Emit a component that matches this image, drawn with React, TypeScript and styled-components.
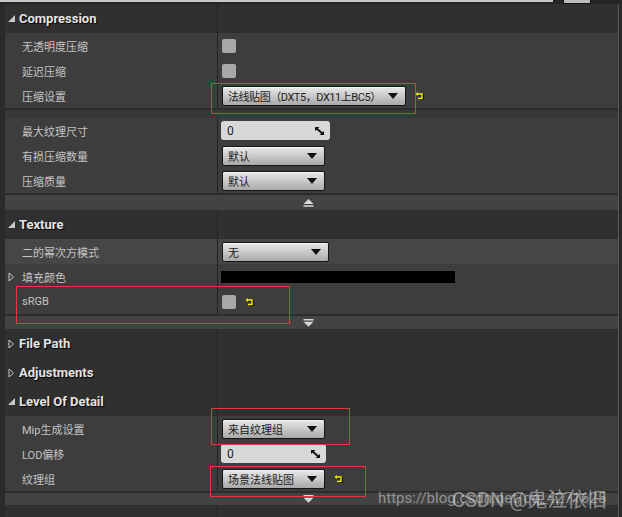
import React from 'react';
import styled, { createGlobalStyle } from 'styled-components';

const GlobalStyle = createGlobalStyle`
  html, body {
    margin: 0;
    padding: 0;
    background: #2a2a2a;
  }
  body {
    font-family: Roboto, "Noto Sans CJK SC", sans-serif;
  }
`;

const Page = styled.div`
  position: relative;
  width: 622px;
  height: 517px;
  overflow: hidden;
  background: #2a2a2a;
  display: flex;
  flex-direction: column;
`;

const TopBar = styled.div`
  height: 4px;
  flex-shrink: 0;
  display: flex;
  align-items: flex-start;
  gap: 10px;
  background: #262626;
`;

const SearchStub = styled.div`
  width: 553px;
  height: 2px;
  background: #c8c8c8;
`;

const ButtonStub = styled.div`
  width: 26px;
  height: 3px;
  background: #bcbcbc;
  border: 1px solid #111;
  border-top: none;
`;

const Panel = styled.div`
  margin-left: 5px;
  width: 613px;
  flex: 1;
  display: flex;
  flex-direction: column;
  background: #303030;
  border-right: 1px solid #565656;
`;

const HeaderWrap = styled.div`
  display: grid;
  grid-template-columns: 213px 1fr;
  height: 29px;
  flex-shrink: 0;
  background: #303030;
`;

const HeaderName = styled.div`
  display: flex;
  align-items: center;
  gap: 4px;
  padding-left: 3px;
  border-right: 1px solid #222;
  font-size: 13px;
  font-weight: 700;
  color: #e4e4e4;
  text-shadow: 1px 1px 1px #000;
`;

const RowWrap = styled.div<{ $hover?: boolean }>`
  display: grid;
  grid-template-columns: 213px 1fr;
  height: 25px;
  flex-shrink: 0;
  background: ${p => (p.$hover ? '#464646' : '#3d3d3d')};
`;

const NameCell = styled.div<{ $expander?: boolean }>`
  display: flex;
  align-items: center;
  padding-left: ${p => (p.$expander ? 3 : 17)}px;
  border-right: 1px solid #222;
  color: #c4c4c4;
  font-size: 11px;
  white-space: nowrap;
`;

const ValueCell = styled.div`
  display: flex;
  align-items: center;
  gap: 9px;
  padding-left: 4px;
`;

const Separator = styled.div`
  height: 10px;
  flex-shrink: 0;
  box-sizing: border-box;
  background: #383838;
  border-top: 2px solid #2c2c2c;
`;

const AdvancedStrip = styled.div<{ $h: number }>`
  height: ${p => p.$h}px;
  flex-shrink: 0;
  box-sizing: border-box;
  display: flex;
  align-items: center;
  justify-content: center;
  padding-right: 7px;
  background: #434343;
  border-top: 2px solid #2c2c2c;
`;

const Filler = styled.div`
  flex: 1;
  display: grid;
  grid-template-columns: 213px 1fr;
`;

const FillerName = styled.div`
  border-right: 1px solid #222;
`;

const Checkbox = styled.div`
  width: 14px;
  height: 14px;
  border-radius: 2px;
  background: #a8a8a8;
`;

const Combo = styled.div<{ $w?: number }>`
  display: flex;
  align-items: center;
  justify-content: space-between;
  gap: 4px;
  box-sizing: border-box;
  width: ${p => (p.$w ? `${p.$w}px` : 'auto')};
  height: 20px;
  padding: 0 7px 0 5px;
  border: 1px solid #161616;
  border-radius: 2px;
  background: linear-gradient(#e9e9e9, #a9a9a9);
  box-shadow: inset 0 1px 0 #f6f6f6;
  color: #1c1c1c;
  font-size: 11px;
  white-space: nowrap;

  svg {
    flex-shrink: 0;
  }
`;

const ComboText = styled.span<{ $tight?: boolean }>`
  letter-spacing: ${p => (p.$tight ? '-0.45px' : 'normal')};
`;

const NumberBox = styled.div<{ $w: number }>`
  display: flex;
  align-items: center;
  justify-content: space-between;
  box-sizing: border-box;
  width: ${p => p.$w}px;
  height: 19px;
  margin-left: -1px;
  padding: 0 6px 0 6px;
  border-radius: 3px;
  background: #d8d8d8;
  color: #1c1c1c;
  font-size: 12px;
`;

const ColorBar = styled.div`
  width: 234px;
  height: 12px;
  margin-left: -1px;
  background: #000;
`;

const Mark = styled.div<{ $x: number; $y: number; $w: number; $h: number }>`
  position: absolute;
  left: ${p => p.$x}px;
  top: ${p => p.$y}px;
  width: ${p => p.$w}px;
  height: ${p => p.$h}px;
  box-sizing: border-box;
  border: 1px solid #e03a3a;
  pointer-events: none;
`;

const Watermark = styled.div`
  position: absolute;
  left: 378px;
  top: 484px;
  width: 240px;
  height: 26px;
  pointer-events: none;
`;

const WatermarkUrl = styled.span`
  position: absolute;
  left: 0;
  top: 5px;
  font-family: Roboto, sans-serif;
  font-size: 15px;
  color: rgba(200, 200, 200, 0.6);
  white-space: nowrap;
`;

const WatermarkName = styled.span`
  position: absolute;
  left: 74px;
  top: 0;
  font-family: Roboto, "Noto Sans CJK SC", sans-serif;
  font-size: 20px;
  color: rgba(255, 255, 255, 0.45);
  white-space: nowrap;
`;

const ExpandedArrow = () => (
  <svg width="7" height="7" viewBox="0 0 7 7">
    <polygon points="7,0 7,7 0,7" fill="#c8c8c8" />
  </svg>
);

const CollapsedArrow = ({ w = 7 }: { w?: number }) => (
  <svg width={w} height="10" viewBox={`0 0 ${w} 10`}>
    <polygon points="1,1 5.5,5 1,9" fill="none" stroke="#c8c8c8" strokeWidth="1" />
  </svg>
);

const DropArrow = () => (
  <svg width="10" height="6" viewBox="0 0 10 6">
    <polygon points="0,0 10,0 5,6" fill="#111" />
  </svg>
);

const SpinIcon = () => (
  <svg width="9" height="8" viewBox="0 0 9 8">
    <polygon points="0,0 4.5,0 0,4" fill="#111" />
    <polygon points="9,8 4.5,8 9,4" fill="#111" />
    <line x1="1" y1="1" x2="8" y2="7" stroke="#111" strokeWidth="2" />
  </svg>
);

const ResetIcon = () => (
  <svg width="9" height="9" viewBox="0 0 9 9">
    <path d="M2.5 3 H7 V7.5 H3" fill="none" stroke="#000" strokeWidth="1.6" transform="translate(0.8 0.8)" />
    <path d="M2.5 3 H7 V7.5 H3" fill="none" stroke="#f6f600" strokeWidth="1.4" />
    <polygon points="0.5,3 2.8,1 2.8,5" fill="#f6f600" />
  </svg>
);

const Eject = ({ up }: { up: boolean }) => (
  <svg width="11" height="8" viewBox="0 0 11 8">
    {up ? (
      <>
        <polygon points="0.5,5 10.5,5 5.5,0" fill="#d8d8d8" />
        <rect x="0.5" y="6.3" width="10" height="1.5" fill="#d8d8d8" />
      </>
    ) : (
      <>
        <rect x="0.5" y="0" width="10" height="1.5" fill="#d8d8d8" />
        <polygon points="0.5,2.8 10.5,2.8 5.5,7.8" fill="#d8d8d8" />
      </>
    )}
  </svg>
);

const Category = ({ title, open }: { title: string; open: boolean }) => (
  <HeaderWrap>
    <HeaderName>
      {open ? <ExpandedArrow /> : <CollapsedArrow />}
      <span>{title}</span>
    </HeaderName>
    <div />
  </HeaderWrap>
);

type RowProps = {
  label: string;
  hover?: boolean;
  expander?: boolean;
  children?: React.ReactNode;
};

const Row = ({ label, hover, expander, children }: RowProps) => (
  <RowWrap $hover={hover}>
    <NameCell $expander={expander}>
      {expander && <CollapsedArrow w={14} />}
      {label}
    </NameCell>
    <ValueCell>{children}</ValueCell>
  </RowWrap>
);

const Select = ({ value, w, tight }: { value: string; w?: number; tight?: boolean }) => (
  <Combo $w={w}>
    <ComboText $tight={tight}>{value}</ComboText>
    <DropArrow />
  </Combo>
);

const Spin = ({ value, w }: { value: string; w: number }) => (
  <NumberBox $w={w}>
    <span>{value}</span>
    <SpinIcon />
  </NumberBox>
);

export default function App() {
  return (
    <>
      <GlobalStyle />
      <Page>
        <TopBar>
          <SearchStub />
          <ButtonStub />
        </TopBar>
        <Panel>
          <Category title="Compression" open />
          <Row label="无透明度压缩">
            <Checkbox />
          </Row>
          <Row label="延迟压缩">
            <Checkbox />
          </Row>
          <Row label="压缩设置">
            <Select value="法线贴图（DXT5，DX11上BC5）" w={184} tight />
            <ResetIcon />
          </Row>
          <Separator />
          <Row label="最大纹理尺寸">
            <Spin value="0" w={109} />
          </Row>
          <Row label="有损压缩数量">
            <Select value="默认" w={103} />
          </Row>
          <Row label="压缩质量">
            <Select value="默认" w={103} />
          </Row>
          <AdvancedStrip $h={17}>
            <Eject up />
          </AdvancedStrip>

          <Category title="Texture" open />
          <Row label="二的幂次方模式" hover>
            <Select value="无" w={107} />
          </Row>
          <Row label="填充颜色" expander>
            <ColorBar />
          </Row>
          <Row label="sRGB">
            <Checkbox />
            <ResetIcon />
          </Row>
          <AdvancedStrip $h={15}>
            <Eject up={false} />
          </AdvancedStrip>

          <Category title="File Path" open={false} />
          <Category title="Adjustments" open={false} />
          <Category title="Level Of Detail" open />
          <Row label="Mip生成设置">
            <Select value="来自纹理组" w={103} />
          </Row>
          <Row label="LOD偏移">
            <Spin value="0" w={105} />
          </Row>
          <Row label="纹理组">
            <Select value="场景法线贴图" w={103} />
            <ResetIcon />
          </Row>
          <AdvancedStrip $h={14}>
            <Eject up={false} />
          </AdvancedStrip>
          <Filler>
            <FillerName />
            <div />
          </Filler>
        </Panel>

        <Mark $x={211} $y={83} $w={205} $h={31} />
        <Mark $x={16} $y={286} $w={274} $h={38} />
        <Mark $x={211} $y={408} $w={139} $h={37} />
        <Mark $x={210} $y={466} $w={156} $h={31} />

        <Watermark>
          <WatermarkUrl>https://blog.csdn.net/qq_4271625</WatermarkUrl>
          <WatermarkName>CSDN @鬼泣依旧</WatermarkName>
        </Watermark>
      </Page>
    </>
  );
}
